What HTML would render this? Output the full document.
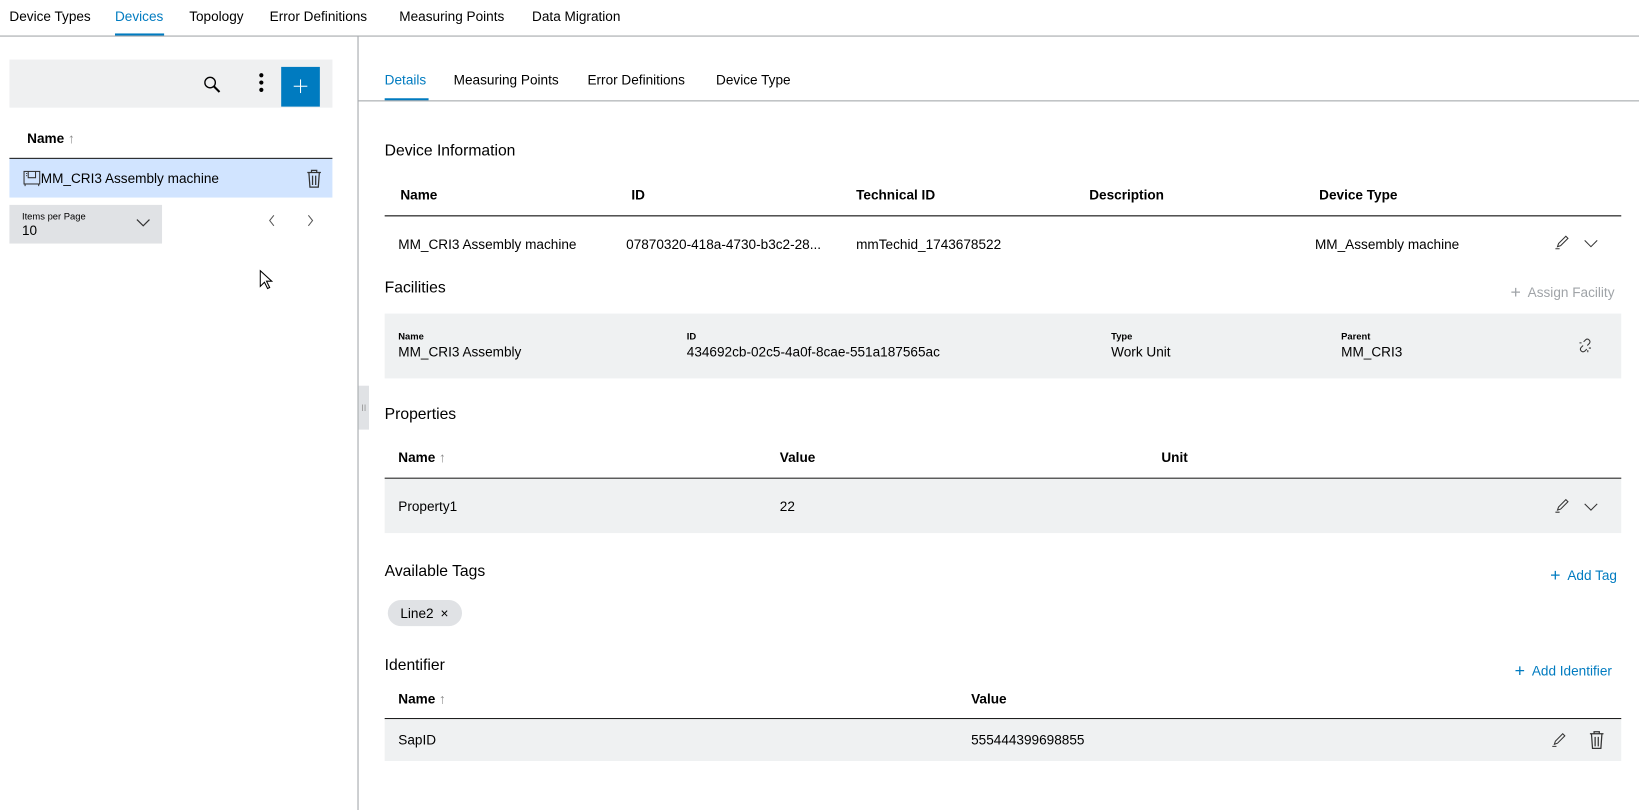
<!DOCTYPE html>
<html><head><meta charset="utf-8"><style>
*{box-sizing:border-box;margin:0;padding:0}
body{width:1639px;height:775px;overflow:hidden;background:#fff;font-family:"Liberation Sans",sans-serif;font-size:13px;color:#000;position:relative}
#w{position:absolute;left:0;top:0;width:1568px;height:742px;transform:scale(1.0453);transform-origin:0 0}
.a{position:absolute;white-space:nowrap}
.b{font-weight:bold}
.h{font-size:15px}
.blue{color:#007bc0}
.sm{font-size:9px;font-weight:bold}
</style></head><body><div id="w">
<div class="a" style="left:9px;top:8px">Device Types</div>
<div class="a blue" style="left:110px;top:8px">Devices</div>
<div class="a" style="left:181px;top:8px">Topology</div>
<div class="a" style="left:258px;top:8px">Error Definitions</div>
<div class="a" style="left:382px;top:8px">Measuring Points</div>
<div class="a" style="left:509px;top:8px">Data Migration</div>
<div class="a" style="left:110px;top:32px;width:47px;height:2px;background:#007bc0"></div>
<div class="a" style="left:0;top:34px;width:1568px;height:1px;background:#a0a4a8"></div>
<div class="a" style="left:342px;top:35px;width:1px;height:740px;background:#a0a4a8"></div>
<div class="a" style="left:343px;top:369px;width:10px;height:42px;background:#e0e2e5;color:#999;font-size:9px;text-align:center;line-height:42px">II</div>

<div class="a" style="left:9px;top:57px;width:309px;height:46px;background:#eff0f1"></div>
<svg class="a" style="left:194px;top:72px" width="18" height="18" viewBox="0 0 18 18"><circle cx="7" cy="7" r="5" fill="none" stroke="#000" stroke-width="1.3"/><path d="M10.5 10.5L16 16" stroke="#000" stroke-width="2"/></svg>
<div class="a" style="left:248px;top:70px;width:4px;height:4px;border-radius:2px;background:#000;box-shadow:0 7px #000,0 14px #000"></div>
<div class="a" style="left:269px;top:64px;width:37px;height:38px;background:#007bc0"></div>
<div class="a" style="left:281px;top:82px;width:13px;height:1px;background:#fff"></div>
<div class="a" style="left:287px;top:76px;width:1px;height:13px;background:#fff"></div>
<div class="a b" style="left:26px;top:125px">Name <span style="color:#888;font-weight:normal">↑</span></div>
<div class="a" style="left:9px;top:151px;width:309px;height:1px;background:#000"></div>
<div class="a" style="left:9px;top:152px;width:309px;height:37px;background:#d1e4ff"></div>
<svg class="a" style="left:22px;top:163px" width="17" height="16" viewBox="0 0 17 16"><rect x="1" y="1" width="15" height="12" fill="none" stroke="#333"/><path d="M5 1v6h7V1M2 13v2M15 13v2M3 3h1M3 5h1" stroke="#333" fill="none"/></svg>
<div class="a" style="left:39px;top:163px">MM_CRI3 Assembly machine</div>
<svg class="a" style="left:293px;top:162px" width="15" height="18" viewBox="0 0 15 18"><path d="M1 3h13M5 3V1h5v2M2.5 3l1 14h8l1-14M6 6v9M9 6v9" fill="none" stroke="#333" stroke-width="1.2"/></svg>
<div class="a" style="left:9px;top:196px;width:146px;height:37px;background:#e0e2e5"></div>
<div class="a" style="left:21px;top:202px;font-size:9px">Items per Page</div>
<div class="a" style="left:21px;top:213px">10</div>
<svg class="a" style="left:130px;top:209px" width="14" height="9" viewBox="0 0 14 9"><path d="M1 1l6 6 6-6" fill="none" stroke="#333" stroke-width="1.2"/></svg>
<svg class="a" style="left:256px;top:205px" width="8" height="12"><path d="M6 1L2 6l4 5" fill="none" stroke="#555"/></svg>
<svg class="a" style="left:293px;top:205px" width="8" height="12"><path d="M2 1l4 5-4 5" fill="none" stroke="#555"/></svg>
<svg class="a" style="left:248px;top:258px" width="14" height="20"><path d="M1 1v15l4-4 3 6 2-1-3-6h5z" fill="#fff" stroke="#000"/></svg>

<div class="a blue" style="left:368px;top:69px">Details</div>
<div class="a" style="left:434px;top:69px">Measuring Points</div>
<div class="a" style="left:562px;top:69px">Error Definitions</div>
<div class="a" style="left:685px;top:69px">Device Type</div>
<div class="a" style="left:368px;top:94px;width:42px;height:2px;background:#007bc0"></div>
<div class="a" style="left:343px;top:96px;width:1225px;height:1px;background:#a0a4a8"></div>

<div class="a h" style="left:368px;top:136px">Device Information</div>
<div class="a b" style="left:383px;top:179px">Name</div>
<div class="a b" style="left:604px;top:179px">ID</div>
<div class="a b" style="left:819px;top:179px">Technical ID</div>
<div class="a b" style="left:1042px;top:179px">Description</div>
<div class="a b" style="left:1262px;top:179px">Device Type</div>
<div class="a" style="left:368px;top:206px;width:1183px;height:1px;background:#000"></div>
<div class="a" style="left:381px;top:226px">MM_CRI3 Assembly machine</div>
<div class="a" style="left:599px;top:226px">07870320-418a-4730-b3c2-28...</div>
<div class="a" style="left:819px;top:226px">mmTechid_1743678522</div>
<div class="a" style="left:1258px;top:226px">MM_Assembly machine</div>
<svg class="a" style="left:1487px;top:225px" width="16" height="14" viewBox="0 0 16 14"><path d="M3 11l1-3 7-7 2 2-7 7zM1 13h4" fill="none" stroke="#333"/></svg>
<svg class="a" style="left:1515px;top:229px" width="14" height="8"><path d="M1 1l6 6 6-6" fill="none" stroke="#333"/></svg>

<div class="a h" style="left:368px;top:267px">Facilities</div>
<div class="a" style="left:1445px;top:269px;color:#a0a4a8"><span style="font-size:17px;position:relative;top:1px">+</span>&nbsp; Assign Facility</div>
<div class="a" style="left:368px;top:300px;width:1183px;height:62px;background:#eff1f2"></div>
<div class="a sm" style="left:381px;top:317px">Name</div><div class="a" style="left:381px;top:329px">MM_CRI3 Assembly</div>
<div class="a sm" style="left:657px;top:317px">ID</div><div class="a" style="left:657px;top:329px">434692cb-02c5-4a0f-8cae-551a187565ac</div>
<div class="a sm" style="left:1063px;top:317px">Type</div><div class="a" style="left:1063px;top:329px">Work Unit</div>
<div class="a sm" style="left:1283px;top:317px">Parent</div><div class="a" style="left:1283px;top:329px">MM_CRI3</div>
<svg class="a" style="left:1509px;top:323px" width="15" height="15" viewBox="0 0 15 15"><path d="M6 4l2-2a2.5 2.5 0 013.5 3.5l-2 2M9 11l-2 2a2.5 2.5 0 01-3.5-3.5l2-2M2 5h2M10 12v2M11 10h2" fill="none" stroke="#333"/></svg>

<div class="a h" style="left:368px;top:388px">Properties</div>
<div class="a b" style="left:381px;top:430px">Name <span style="color:#888;font-weight:normal">↑</span></div>
<div class="a b" style="left:746px;top:430px">Value</div>
<div class="a b" style="left:1111px;top:430px">Unit</div>
<div class="a" style="left:368px;top:457px;width:1183px;height:1px;background:#000"></div>
<div class="a" style="left:368px;top:458px;width:1183px;height:52px;background:#eff1f2"></div>
<div class="a" style="left:381px;top:477px">Property1</div>
<div class="a" style="left:746px;top:477px">22</div>
<svg class="a" style="left:1487px;top:477px" width="16" height="14" viewBox="0 0 16 14"><path d="M3 11l1-3 7-7 2 2-7 7zM1 13h4" fill="none" stroke="#333"/></svg>
<svg class="a" style="left:1515px;top:481px" width="14" height="8"><path d="M1 1l6 6 6-6" fill="none" stroke="#333"/></svg>

<div class="a h" style="left:368px;top:538px">Available Tags</div>
<div class="a blue" style="left:1483px;top:540px"><span style="font-size:17px;position:relative;top:1px">+</span>&nbsp; Add Tag</div>
<div class="a" style="left:371px;top:574px;width:71px;height:25px;border-radius:13px;background:#e0e2e5"></div>
<div class="a" style="left:383px;top:579px">Line2 <span style="margin-left:3px">×</span></div>

<div class="a h" style="left:368px;top:628px">Identifier</div>
<div class="a blue" style="left:1449px;top:631px"><span style="font-size:17px;position:relative;top:1px">+</span>&nbsp; Add Identifier</div>
<div class="a b" style="left:381px;top:661px">Name <span style="color:#888;font-weight:normal">↑</span></div>
<div class="a b" style="left:929px;top:661px">Value</div>
<div class="a" style="left:368px;top:687px;width:1183px;height:1px;background:#000"></div>
<div class="a" style="left:368px;top:688px;width:1183px;height:40px;background:#eff1f2"></div>
<div class="a" style="left:381px;top:700px">SapID</div>
<div class="a" style="left:929px;top:700px">555444399698855</div>
<svg class="a" style="left:1484px;top:701px" width="16" height="14" viewBox="0 0 16 14"><path d="M3 11l1-3 7-7 2 2-7 7zM1 13h4" fill="none" stroke="#333"/></svg>
<svg class="a" style="left:1520px;top:699px" width="15" height="18" viewBox="0 0 15 18"><path d="M1 3h13M5 3V1h5v2M2.5 3l1 14h8l1-14M6 6v9M9 6v9" fill="none" stroke="#333" stroke-width="1.2"/></svg>
</div></body></html>
